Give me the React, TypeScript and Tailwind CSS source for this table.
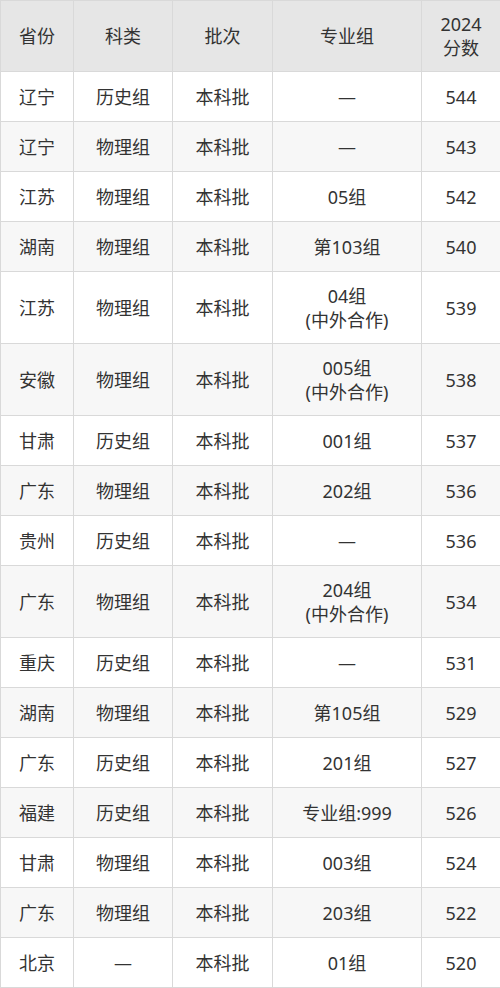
import React from 'react';

type Row = {
  province: string;
  subject: string;
  batch: string;
  group: string[];
  score: string;
};

const rows: Row[] = [
  { province: '辽宁', subject: '历史组', batch: '本科批', group: ['—'], score: '544' },
  { province: '辽宁', subject: '物理组', batch: '本科批', group: ['—'], score: '543' },
  { province: '江苏', subject: '物理组', batch: '本科批', group: ['05组'], score: '542' },
  { province: '湖南', subject: '物理组', batch: '本科批', group: ['第103组'], score: '540' },
  { province: '江苏', subject: '物理组', batch: '本科批', group: ['04组', '(中外合作)'], score: '539' },
  { province: '安徽', subject: '物理组', batch: '本科批', group: ['005组', '(中外合作)'], score: '538' },
  { province: '甘肃', subject: '历史组', batch: '本科批', group: ['001组'], score: '537' },
  { province: '广东', subject: '物理组', batch: '本科批', group: ['202组'], score: '536' },
  { province: '贵州', subject: '历史组', batch: '本科批', group: ['—'], score: '536' },
  { province: '广东', subject: '物理组', batch: '本科批', group: ['204组', '(中外合作)'], score: '534' },
  { province: '重庆', subject: '历史组', batch: '本科批', group: ['—'], score: '531' },
  { province: '湖南', subject: '物理组', batch: '本科批', group: ['第105组'], score: '529' },
  { province: '广东', subject: '历史组', batch: '本科批', group: ['201组'], score: '527' },
  { province: '福建', subject: '历史组', batch: '本科批', group: ['专业组:999'], score: '526' },
  { province: '甘肃', subject: '物理组', batch: '本科批', group: ['003组'], score: '524' },
  { province: '广东', subject: '物理组', batch: '本科批', group: ['203组'], score: '522' },
  { province: '北京', subject: '—', batch: '本科批', group: ['01组'], score: '520' },
];

const cell = 'border border-[#d9d9d9] text-center align-middle px-1';

export default function App() {
  return (
    <div
      className="w-[500px] bg-white text-[#333333] text-[18px] leading-[24px]"
      style={{ fontFamily: '"Noto Sans", "Noto Sans CJK SC", sans-serif' }}
    >
      <table className="w-[500px] border-collapse table-fixed">
        <colgroup>
          <col className="w-[73px]" />
          <col className="w-[99px]" />
          <col className="w-[100px]" />
          <col className="w-[149px]" />
          <col className="w-[79px]" />
        </colgroup>
        <thead>
          <tr className="h-[71px] bg-[#e6e6e6]">
            <th className={`${cell} font-normal`}>省份</th>
            <th className={`${cell} font-normal`}>科类</th>
            <th className={`${cell} font-normal`}>批次</th>
            <th className={`${cell} font-normal`}>专业组</th>
            <th className={`${cell} font-normal`}>
              2024
              <br />
              分数
            </th>
          </tr>
        </thead>
        <tbody>
          {rows.map((r, i) => (
            <tr
              key={i}
              className={`${r.group.length > 1 ? 'h-[72px]' : 'h-[50px]'} ${
                i % 2 === 1 ? 'bg-[#f7f7f7]' : 'bg-white'
              }`}
            >
              <td className={cell}>{r.province}</td>
              <td className={cell}>{r.subject}</td>
              <td className={cell}>{r.batch}</td>
              <td className={cell}>
                {r.group.map((g, j) => (
                  <div key={j}>{g}</div>
                ))}
              </td>
              <td className={cell}>{r.score}</td>
            </tr>
          ))}
        </tbody>
      </table>
    </div>
  );
}
